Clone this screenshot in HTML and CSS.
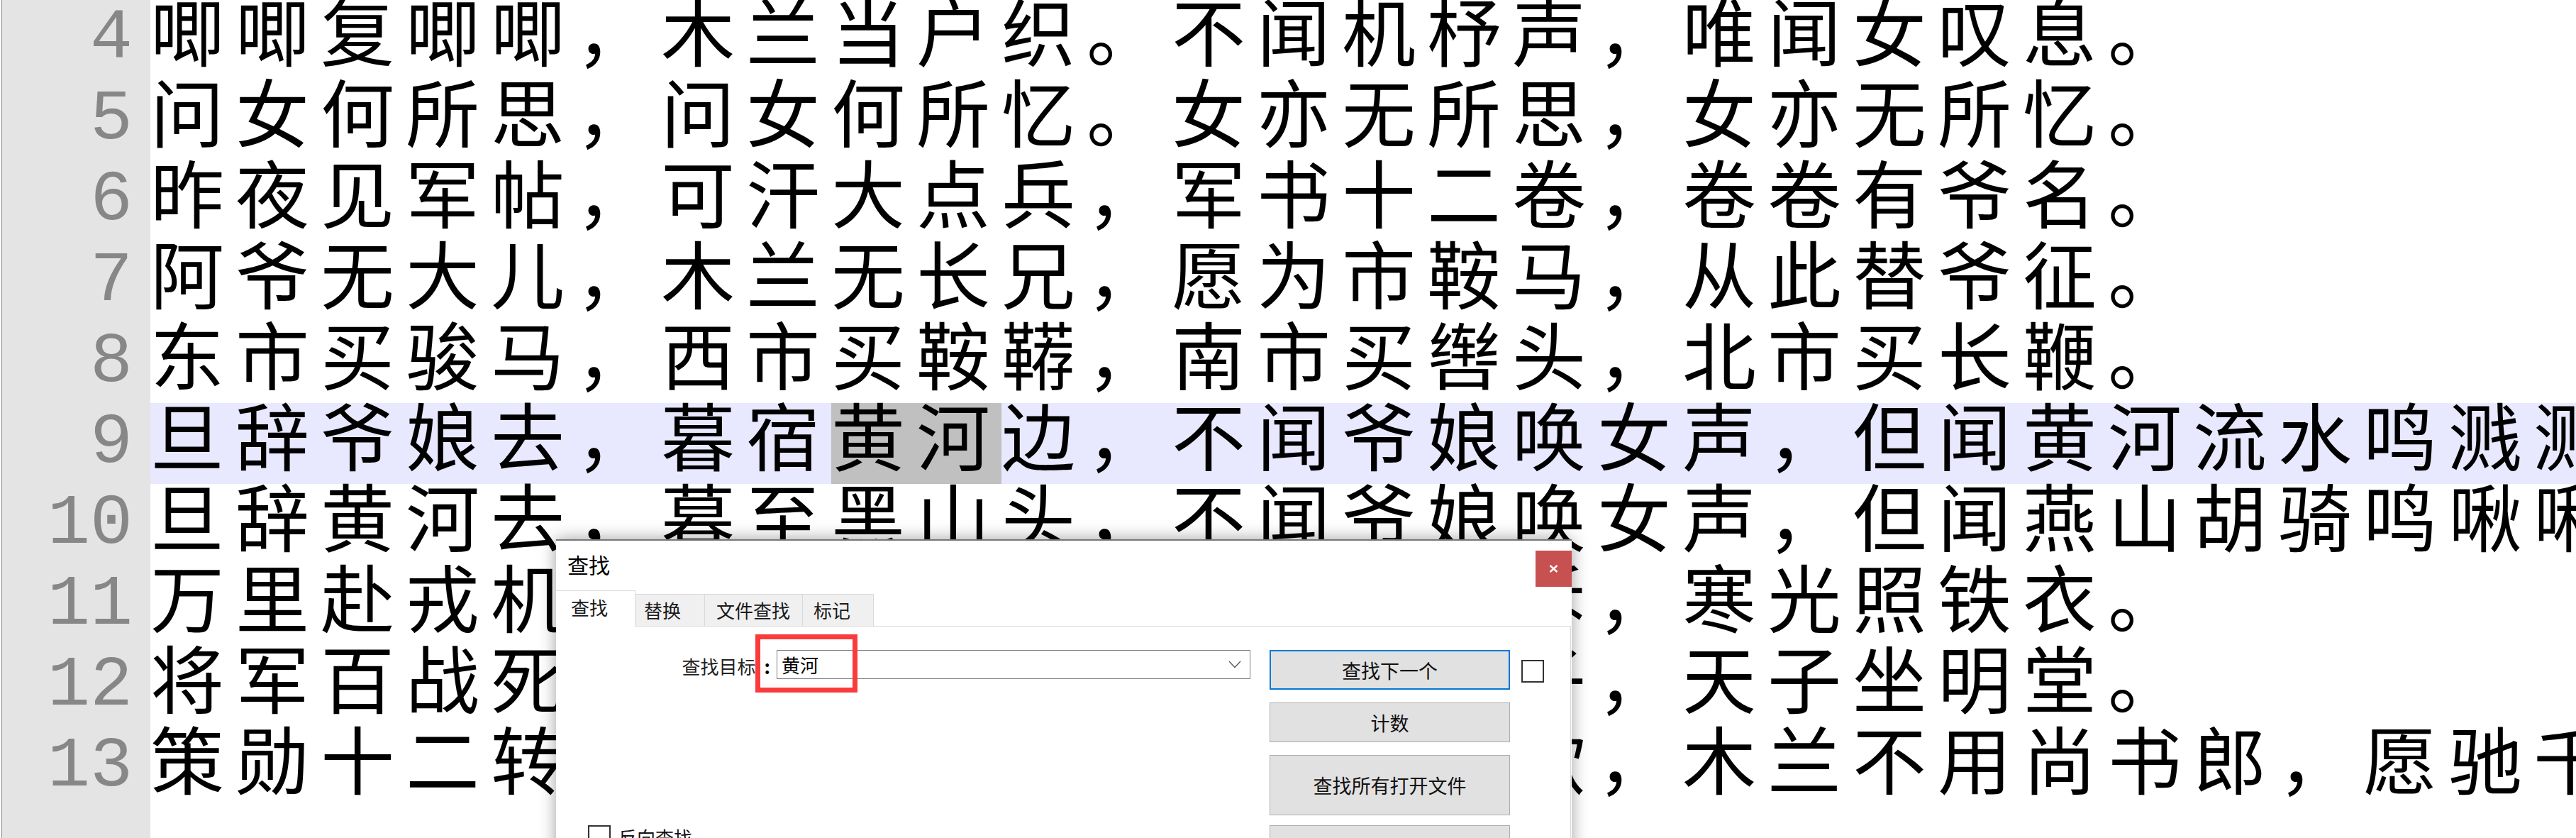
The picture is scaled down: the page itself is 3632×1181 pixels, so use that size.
FILE: index.html
```html
<!DOCTYPE html>
<html lang="zh-CN">
<head>
<meta charset="utf-8">
<title>木兰诗 - 查找</title>
<link rel="stylesheet" href="styles.css">
</head>
<body>
<div class="editor">
  <div class="gutter">
    <div class="ln">4</div>
    <div class="ln">5</div>
    <div class="ln">6</div>
    <div class="ln">7</div>
    <div class="ln">8</div>
    <div class="ln">9</div>
    <div class="ln">10</div>
    <div class="ln">11</div>
    <div class="ln">12</div>
    <div class="ln">13</div>
  </div>
  <div class="code">
    <div class="line">唧唧复唧唧，木兰当户织。不闻机杼声，唯闻女叹息。</div>
    <div class="line">问女何所思，问女何所忆。女亦无所思，女亦无所忆。</div>
    <div class="line">昨夜见军帖，可汗大点兵，军书十二卷，卷卷有爷名。</div>
    <div class="line">阿爷无大儿，木兰无长兄，愿为市鞍马，从此替爷征。</div>
    <div class="line">东市买骏马，西市买鞍鞯，南市买辔头，北市买长鞭。</div>
    <div class="line current">旦辞爷娘去，暮宿<span class="sel">黄河</span>边，不闻爷娘唤女声，但闻黄河流水鸣溅溅。</div>
    <div class="line">旦辞黄河去，暮至黑山头，不闻爷娘唤女声，但闻燕山胡骑鸣啾啾。</div>
    <div class="line">万里赴戎机，关山度若飞。朔气传金柝，寒光照铁衣。</div>
    <div class="line">将军百战死，壮士十年归。归来见天子，天子坐明堂。</div>
    <div class="line">策勋十二转，赏赐百千强。可汗问所欲，木兰不用尚书郎，愿驰千里足，送儿还故乡。</div>
  </div>
</div>

<div class="dialog">
  <div class="titlebar">
    <span class="title">查找</span>
    <button class="close" type="button" aria-label="关闭">
      <svg width="13" height="11" viewBox="0 0 13 11"><path d="M1.5 1 L11.5 10 M11.5 1 L1.5 10" stroke="#fff" stroke-width="2.4" fill="none"/></svg>
    </button>
  </div>
  <div class="tabs">
    <div class="tab active">查找</div>
    <div class="tab tab-replace">替换</div>
    <div class="tab tab-files">文件查找</div>
    <div class="tab tab-mark">标记</div>
    <div class="tab-fill"></div>
  </div>
  <div class="panel">
    <div class="form">
      <div class="search-row">
        <label class="label">查找目标<span class="colon">:</span></label>
        <div class="combo">
          <span class="combo-text">黄河</span>
          <svg class="chev" width="18" height="11" viewBox="0 0 18 11"><path d="M1 1 L9 9.5 L17 1" stroke="#555" stroke-width="1.3" fill="none"/></svg>
        </div>
      </div>
      <div class="check-row"><span class="box"></span><span class="check-label">反向查找</span></div>
    </div>
    <div class="buttons">
      <button class="btn primary" type="button">查找下一个</button>
      <button class="btn" type="button">计数</button>
      <button class="btn tall" type="button">查找所有打开文件</button>
      <button class="btn tall last" type="button">在当前文件中查找</button>
    </div>
    <span class="box side-box"></span>
  </div>
  <div class="callout"></div>
</div>
</body>
</html>
```

FILE: styles.css
```css
html, body {
  margin: 0;
  padding: 0;
  background: #ffffff;
}

body {
  width: 3632px;
  height: 1181px;
  overflow: hidden;
  position: relative;
}

.editor {
  display: flex;
  height: 1183px;
  margin-top: -2px;
}

.gutter {
  box-sizing: border-box;
  width: 210px;
  margin-left: 2px;
  border-left: 1px solid #8a8a8a;
  background: #e4e4e4;
  flex: none;
}

.ln {
  height: 114px;
  line-height: 114px;
  padding-right: 25px;
  text-align: right;
  font-family: "Liberation Mono", "DejaVu Sans Mono", monospace;
  font-size: 100px;
  color: #878787;
}

.code {
  flex: 1;
  overflow: hidden;
  white-space: nowrap;
  font-family: "Noto Sans CJK SC", sans-serif;
  font-size: 104px;
  letter-spacing: 16px;
  color: #000000;
}

.line {
  height: 114px;
  line-height: 86px;
}

.line.current {
  background: #e8e8ff;
}

.sel {
  display: inline-block;
  height: 114px;
  line-height: 86px;
  vertical-align: top;
  background: #c0c0c0;
}

/* dialog */
.dialog {
  position: absolute;
  left: 784px;
  top: 760px;
  width: 1432px;
  height: 520px;
  box-sizing: border-box;
  border-top: 2px solid #777777;
  background: #ffffff;
  box-shadow: 0 0 22px rgba(0, 0, 0, 0.38);
  font-family: "Noto Sans CJK SC", sans-serif;
  color: #111111;
}

.titlebar {
  display: flex;
  justify-content: space-between;
  align-items: flex-start;
  height: 70px;
}

.title {
  padding-left: 16px;
  font-size: 30px;
  line-height: 66px;
  color: #000000;
}

.close {
  width: 51px;
  height: 51px;
  margin-top: 14px;
  padding: 0;
  border: none;
  background: #c75050;
  display: flex;
  align-items: center;
  justify-content: center;
}

.tabs {
  display: flex;
  align-items: flex-end;
  height: 51px;
  margin-right: 1px;
}

.tab {
  box-sizing: border-box;
  height: 46px;
  padding-left: 14px;
  border-top: 1px solid #d9d9d9;
  border-right: 1px solid #d9d9d9;
  border-bottom: 1px solid #d9d9d9;
  background: #f0f0f0;
  font-size: 26px;
  line-height: 44px;
  color: #1a1a1a;
}

.tab.active {
  width: 112px;
  height: 51px;
  padding-left: 21px;
  padding-bottom: 4px;
  border-bottom: none;
  background: #ffffff;
  line-height: 46px;
}

.tab-replace { width: 98px; padding-left: 12px; }
.tab-files { width: 138px; padding-left: 16px; }
.tab-mark { width: 100px; padding-left: 15px; }

.tab-fill {
  flex: 1;
  height: 1px;
  background: #d9d9d9;
}

.panel {
  display: flex;
  align-items: flex-start;
  height: 400px;
  margin-right: 1px;
  padding-top: 32px;
  box-sizing: border-box;
  border-right: 1px solid #d9d9d9;
}

.form {
  width: 979px;
  flex: none;
}

.search-row {
  display: flex;
  justify-content: flex-end;
  align-items: center;
}

.label {
  padding-top: 5px;
  margin-right: 9px;
  font-size: 26px;
  color: #222222;
}

.colon {
  margin-left: 12px;
  font-weight: 700;
  color: #000000;
}

.combo {
  box-sizing: border-box;
  width: 668px;
  height: 41px;
  border: 1px solid #7a7a7a;
  display: flex;
  align-items: center;
  justify-content: space-between;
  padding-left: 6px;
  padding-right: 12px;
}

.combo-text {
  font-size: 26px;
  color: #000000;
}

.check-row {
  display: flex;
  align-items: flex-start;
  gap: 11px;
  margin-top: 206px;
  padding-left: 45px;
}

.box {
  display: block;
  box-sizing: border-box;
  width: 32px;
  height: 32px;
  border: 2px solid #333333;
  background: #ffffff;
  flex: none;
}

.check-label {
  font-size: 26px;
  line-height: 34px;
  color: #111111;
}

.buttons {
  display: flex;
  flex-direction: column;
  width: 339px;
  margin-left: 27px;
  margin-top: 1px;
  flex: none;
}

.btn {
  box-sizing: border-box;
  height: 56px;
  margin-top: 18px;
  padding: 0;
  border: 1px solid #adadad;
  background: #e1e1e1;
  font-family: "Noto Sans CJK SC", sans-serif;
  font-size: 27px;
  color: #111111;
}

.btn.primary {
  margin-top: 0;
  border: 2px solid #0078d7;
}

.btn.tall {
  height: 85px;
}

.btn.last {
  margin-top: 14px;
}

.side-box {
  margin-left: 16px;
  margin-top: 15px;
}

.callout {
  position: absolute;
  left: 281px;
  top: 132px;
  width: 144px;
  height: 82px;
  box-sizing: border-box;
  border: 7px solid #fb3b3b;
}
```
